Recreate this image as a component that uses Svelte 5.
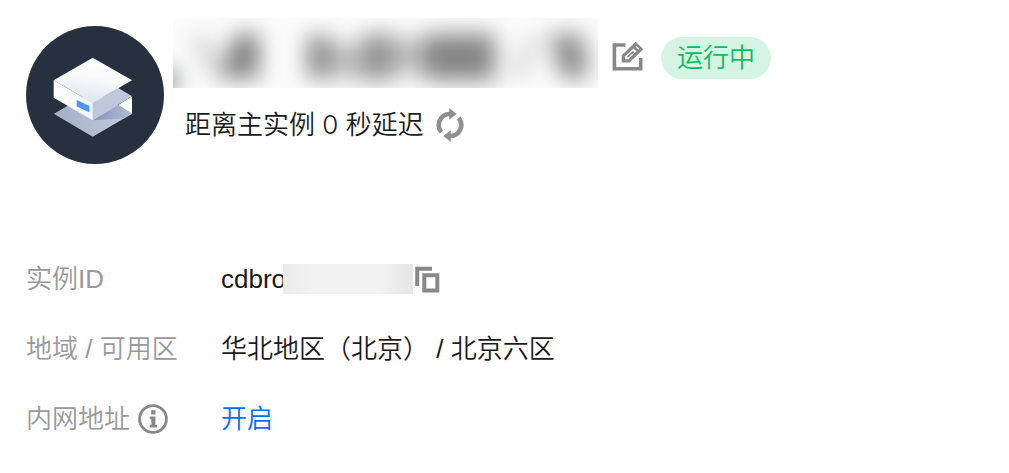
<script>
  let instance = {
    delay: 0,
    status: "运行中",
    id: "cdbro",
    zone: "华北地区（北京） / 北京六区",
  };
</script>

<main>
  <header>
    <svg class="logo" viewBox="0 0 138 138" aria-hidden="true">
      <defs>
        <linearGradient id="top" x1="0.6" y1="0" x2="0.4" y2="1">
          <stop offset="0" stop-color="#ffffff" />
          <stop offset="0.4" stop-color="#fbfbfd" />
          <stop offset="1" stop-color="#dfe3ee" />
        </linearGradient>
        <linearGradient id="front" x1="0" y1="0" x2="1" y2="0.3">
          <stop offset="0" stop-color="#ffffff" />
          <stop offset="1" stop-color="#f1f4fa" />
        </linearGradient>
        <linearGradient id="base" x1="0" y1="0" x2="1" y2="0">
          <stop offset="0" stop-color="#a3afc6" />
          <stop offset="1" stop-color="#c3ccde" />
        </linearGradient>
        <linearGradient id="shade" x1="0" y1="0" x2="1" y2="0">
          <stop offset="0" stop-color="#8496b8" />
          <stop offset="1" stop-color="#b1bdd3" />
        </linearGradient>
      </defs>
      <circle cx="69" cy="69" r="69" fill="#27303f" />
      <path d="M27.7 87.7L67 65L106 87.7L66.7 110.7Z" fill="url(#base)" />
      <path d="M66.7 94.3L92.3 79L106 87.7L98 92.5Z" fill="url(#shade)" />
      <path d="M27.7 71.7V87.7L41 80Z" fill="#27303f" />
      <path d="M106 70.3V87.7L92.3 79Z" fill="#ffffff" />
      <path d="M66.7 77L92.3 62L106 70.3L66.7 94.3Z" fill="#bec8da" />
      <path d="M27.7 54.3L66.7 77V94.3L27.7 71.7Z" fill="url(#front)" />
      <path d="M66.7 31.7L106 54.3L66.7 77L27.7 54.3Z" fill="url(#top)" />
      <path d="M50.7 74L63.3 80V86.3L50.7 80.5Z" fill="#4a94fb" />
    </svg>

    <div class="summary">
      <div class="title">
        <svg class="name-mask" viewBox="0 0 425 70" aria-hidden="true">
          <defs>
            <filter id="soft" x="-10%" y="-60%" width="120%" height="220%" color-interpolation-filters="sRGB">
              <feGaussianBlur stdDeviation="11" />
            </filter>
          </defs>
          <rect width="425" height="70" fill="#fcfcfc" />
          <g filter="url(#soft)" fill="#707070">
            <path d="M16 18L34 18L60 60L40 60Z" opacity="0.3" />
            <path d="M62 16H86V60H48Z" opacity="0.9" />
            <rect x="134" y="18" width="24" height="42" opacity="0.8" />
            <rect x="158" y="26" width="34" height="34" opacity="0.45" />
            <rect x="190" y="16" width="30" height="46" opacity="0.75" />
            <rect x="220" y="20" width="34" height="36" opacity="0.45" />
            <rect x="252" y="16" width="70" height="46" opacity="0.85" />
            <path d="M338 60L352 60L366 18L354 18Z" opacity="0.3" />
            <path d="M376 16H410L416 60H388Z" opacity="0.8" />
            <circle cx="-8" cy="64" r="14" fill="#27303f" opacity="0.5" />
          </g>
        </svg>
        <button class="icon edit" aria-label="编辑">
          <svg width="32" height="32" viewBox="0 0 32 32">
            <path d="M13.5 4H2.4V27.7H28.7V17" fill="none" stroke="#888" stroke-width="3.6" />
            <path
              d="M9.7 14.2L23.7 0.7L31.3 8.3L17.6 21.5H9.7ZM13 15.6V18.2H16.2L24.4 10.3L21.6 7.6ZM23.4 5.8L26.2 8.6L27.2 7.6L24.4 4.8Z"
              fill="#888"
              fill-rule="evenodd"
            />
            <path d="M15.4 16.2L21.4 10.4" stroke="#888" stroke-width="1.8" />
          </svg>
        </button>
        <span class="status">{instance.status}</span>
      </div>
      <div class="delay">
        <span>距离主实例 {instance.delay} 秒延迟</span>
        <button class="icon" aria-label="刷新">
          <svg width="28" height="34" viewBox="0 0 28 34">
            <g fill="none" stroke="#909090" stroke-width="4.6">
              <path d="M5.4 24.1A11 11 0 0 1 14 6" />
              <path d="M22.6 9.9A11 11 0 0 1 14 28" />
            </g>
            <path d="M13.3 0L20.7 5.9L13.3 11.8ZM14.7 34L7.3 28.1L14.7 22.2Z" fill="#909090" />
          </svg>
        </button>
      </div>
    </div>
  </header>

  <dl>
    <dt>实例ID</dt>
    <dd>
      <span>{instance.id}</span>
      <span class="id-mask"></span>
      <button class="icon copy" aria-label="复制">
        <svg width="25" height="27" viewBox="0 0 25 27">
          <path d="M2.2 20V2.7H17" fill="none" stroke="#888" stroke-width="4" />
          <path d="M9.3 9.3H22.3V24.5H9.3Z" fill="none" stroke="#888" stroke-width="4" />
        </svg>
      </button>
    </dd>

    <dt>地域 / 可用区</dt>
    <dd>{instance.zone}</dd>

    <dt>
      内网地址
      <svg class="info" width="30" height="30" viewBox="0 0 30 30" aria-hidden="true">
        <circle cx="15" cy="15" r="13.4" fill="none" stroke="#888" stroke-width="2.8" />
        <path d="M13.2 6.2H17.4V10.4H13.2ZM11.8 12.6H17.4V20.8H19V23.5H11.8V20.8H13.4V15.3H11.8Z" fill="#888" />
      </svg>
    </dt>
    <dd><a href="#enable">开启</a></dd>
  </dl>
</main>

<style>
  :global(body) {
    margin: 0;
    background: #fff;
  }
  main {
    padding: 18px 26px;
    font-family: "Liberation Sans", "Noto Sans CJK SC", sans-serif;
    font-size: 26px;
    font-weight: 350;
    line-height: 38px;
    color: #1a1a1a;
  }
  header {
    display: flex;
    gap: 9px;
  }
  .logo {
    width: 138px;
    height: 138px;
    margin-top: 8px;
    flex-shrink: 0;
  }
  .title {
    display: flex;
    align-items: center;
  }
  .name-mask {
    width: 425px;
    height: 70px;
    flex-shrink: 0;
    overflow: hidden;
  }
  .icon {
    padding: 0;
    border: none;
    background: none;
    cursor: pointer;
  }
  .icon svg,
  .info {
    display: block;
  }
  .edit {
    margin: 8px 17px 0 14px;
  }
  .status {
    margin-top: 10px;
    padding: 0 16px;
    border-radius: 21px;
    line-height: 42px;
    color: #0abf5b;
    background: #d6f4e3;
    white-space: nowrap;
  }
  .delay {
    display: flex;
    align-items: center;
    gap: 12px;
    margin-top: 18px;
    padding-left: 12px;
    font-family: Inter, "Noto Sans CJK SC", sans-serif;
  }
  dl {
    display: grid;
    grid-template-columns: 195px 1fr;
    grid-auto-rows: 70px;
    margin: 80px 0 0;
  }
  dt,
  dd {
    display: flex;
    align-items: center;
    margin: 0;
  }
  dt {
    gap: 8px;
    color: #999;
  }
  .id-mask {
    width: 130px;
    height: 30px;
    margin-left: -3px;
    background: linear-gradient(90deg, #ebebeb, #f2f2f2 25%, #f2f2f2 75%, #e6e6e6);
  }
  .copy {
    margin-left: 2px;
  }
  a {
    color: #006eff;
    text-decoration: none;
  }
</style>
